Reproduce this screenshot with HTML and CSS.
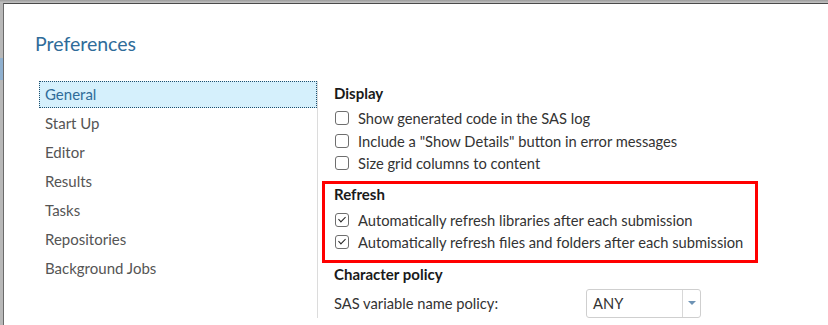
FILE: index.html
```html
<!DOCTYPE html>
<html lang="en">

<head>
  <meta charset="UTF-8">
  <title>Preferences</title>
  <link rel="stylesheet" href="styles.css">
</head>

<body>
  <div class="dialog">
    <h1 class="dialog-title">Preferences</h1>

    <div class="dialog-body">
      <ul class="nav">
        <li class="nav-item selected">General</li>
        <li class="nav-item">Start Up</li>
        <li class="nav-item">Editor</li>
        <li class="nav-item">Results</li>
        <li class="nav-item">Tasks</li>
        <li class="nav-item">Repositories</li>
        <li class="nav-item">Background Jobs</li>
      </ul>

      <div class="panel">
        <div class="section">
          <div class="section-title">Display</div>
          <label class="check-row"><span class="check"></span>Show generated code in the SAS log</label>
          <label class="check-row"><span class="check"></span>Include a "Show Details" button in error messages</label>
          <label class="check-row"><span class="check"></span>Size grid columns to content</label>
        </div>

        <div class="section highlight">
          <div class="section-title">Refresh</div>
          <label class="check-row"><span class="check checked"></span>Automatically refresh libraries after each submission</label>
          <label class="check-row"><span class="check checked"></span>Automatically refresh files and folders after each submission</label>
        </div>

        <div class="section">
          <div class="section-title">Character policy</div>
          <div class="field-row">
            <span class="field-label">SAS variable name policy:</span>
            <div class="select">
              <span class="select-value">ANY</span>
              <span class="select-arrow"></span>
            </div>
          </div>
        </div>
      </div>
    </div>
  </div>
</body>

</html>
```

FILE: styles.css
```css
html,
body {
  height: 100%;
}

body {
  margin: 0;
  overflow: hidden;
  font-family: Lato, "Open Sans", sans-serif;
  background: linear-gradient(#8fb0cf, #8fb0cf) 0 58px / 3px 22px no-repeat,
    linear-gradient(#9c9c9c, #c4c4c4) 0 0 / 100% 3px no-repeat,
    #b8b8b8;
}

.dialog {
  margin: 3px 0 0 3px;
  height: 100%;
  background-color: #fff;
  border-top: 1px solid #4a4a4a;
  border-left: 1px solid #6a6a6a;
  padding-left: 31px;
}

.dialog-title {
  margin: 0;
  padding-top: 27px;
  height: 48px;
  box-sizing: border-box;
  font-size: 19.5px;
  font-weight: normal;
  color: #2f6c99;
  line-height: 26px;
}

.dialog-body {
  display: flex;
  padding-top: 29px;
}

.nav {
  list-style: none;
  margin: 0 0 0 4px;
  padding: 0;
  width: 278px;
  border-right: 1px solid #dcdcdc;
}

.nav-item {
  height: 27px;
  line-height: 25px;
  margin-bottom: 2px;
  padding-left: 5px;
  font-size: 15px;
  color: #555;
  box-sizing: border-box;
  border: 1px solid transparent;
}

.nav-item.selected {
  background-color: #d5f0fc;
  border: 1px dotted #1f4f6e;
  color: #2f6c99;
}

.panel {
  padding: 1px 0 0 16px;
  flex: 1;
}

.section-title {
  font-weight: bold;
  font-size: 15px;
  color: #1a1a1a;
  height: 22px;
  line-height: 22px;
  margin-bottom: 3px;
}

.check-row {
  display: flex;
  align-items: center;
  height: 22.5px;
  font-size: 14.7px;
  color: #333;
}

.check {
  width: 12px;
  height: 12px;
  border: 1px solid #6e6e6e;
  border-radius: 3px;
  margin: 0 9px 0 1px;
  position: relative;
  flex: none;
}

.check.checked::after {
  content: "";
  position: absolute;
  left: 3.5px;
  top: 1px;
  width: 3px;
  height: 6px;
  border: solid #222;
  border-width: 0 1.5px 1.5px 0;
  transform: rotate(45deg);
}

.highlight {
  border: 3px solid #f00;
  margin: 6px 0 0 -12px;
  padding: 0 0 7px 9px;
  width: 421px;
}

.highlight .section-title {
  height: 20px;
  line-height: 20px;
  margin-bottom: 5px;
}

.highlight .check-row {
  height: 22px;
}

.highlight + .section .section-title {
  height: 20px;
  line-height: 20px;
  margin-top: 1px;
  margin-bottom: 5px;
}

.field-row {
  display: flex;
  align-items: center;
  font-size: 14.7px;
  color: #333;
}

.field-label {
  width: 252px;
}

.select {
  display: flex;
  width: 113px;
  height: 27px;
  border: 1px solid #cfcfcf;
  border-radius: 3px;
}

.select-value {
  flex: 1;
  padding-left: 6px;
  line-height: 27px;
}

.select-arrow {
  width: 17px;
  border-left: 1px solid #d8d8d8;
  display: flex;
  align-items: center;
  justify-content: center;
}

.select-arrow::before {
  content: "";
  border-left: 4px solid transparent;
  border-right: 4px solid transparent;
  border-top: 4px solid #6e93b5;
}
```
